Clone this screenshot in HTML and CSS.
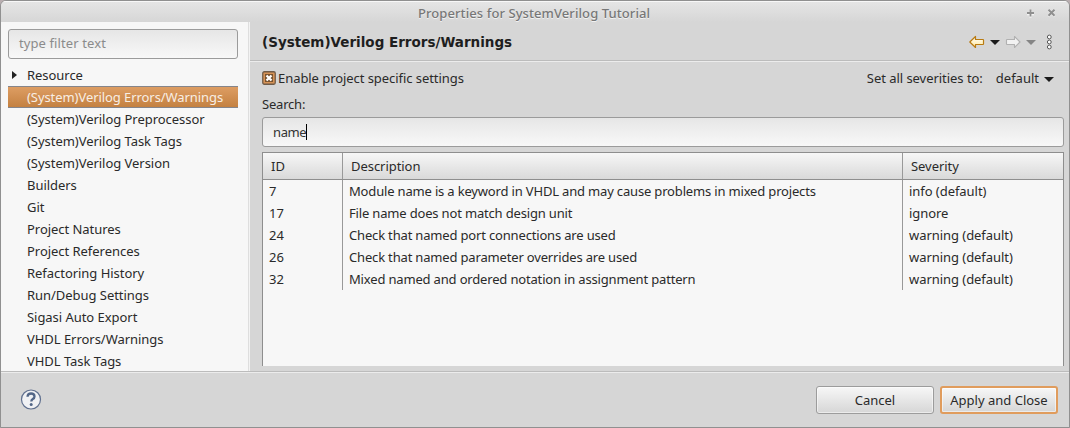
FILE: index.html
```html
<!DOCTYPE html>
<html lang="en">
<head>
<meta charset="utf-8">
<title>Properties for SystemVerilog Tutorial</title>
<link rel="stylesheet" href="styles.css">
</head>
<body>
<div class="window">
  <header class="titlebar">
    <span class="title">Properties for SystemVerilog Tutorial</span>
    <svg class="controls" width="30" height="10" viewBox="0 0 30 10"><path d="M0 5.500h7M3.500 2v7" stroke="#f4f4f4" stroke-width="2" transform="translate(0 .8)"/><path d="M0 5h7M3.500 1.500v7" stroke="#8f8f8f" stroke-width="1.800"/><path d="M21.500 2.500l6 6M27.500 2.500l-6 6" stroke="#f4f4f4" stroke-width="2"/><path d="M21.500 1.700l6 6M27.500 1.700l-6 6" stroke="#8f8f8f" stroke-width="2"/></svg>
  </header>
  <div class="body">
    <nav class="sidebar">
      <div class="field filter">type filter text</div>
      <ul class="tree">
        <li class="t-res"><svg class="expander" width="5" height="8"><path d="M0 0l5 4-5 4z" fill="#222"/></svg>Resource</li>
        <li class="selected">(System)Verilog Errors/Warnings</li>
        <li>(System)Verilog Preprocessor</li>
        <li>(System)Verilog Task Tags</li>
        <li>(System)Verilog Version</li>
        <li>Builders</li>
        <li>Git</li>
        <li>Project Natures</li>
        <li>Project References</li>
        <li>Refactoring History</li>
        <li>Run/Debug Settings</li>
        <li>Sigasi Auto Export</li>
        <li>VHDL Errors/Warnings</li>
        <li>VHDL Task Tags</li>
      </ul>
    </nav>
    <main class="main">
      <div class="pagehead">
        <h1>(System)Verilog Errors/Warnings</h1>
        <svg width="84" height="18" viewBox="969 33 84 18">
          <defs><linearGradient id="gold" x2="0" y2="1"><stop stop-color="#fff"/><stop offset="1" stop-color="#ffe89a"/></linearGradient></defs>
          <path d="M969.800 42l5.700-5.500v3h7.500q.5 0 .5.500v4q0 .5-.5.500h-7.500v3z" fill="url(#gold)" stroke="#b97b12" stroke-width="1.200" stroke-linejoin="round"/>
          <path d="M990 40h10l-5 5z" fill="#1b1b1b"/>
          <path d="M1020 42l-5.500-5.500v3h-7.500q-.5 0-.5.500v4q0 .5.500.5h7.500v3z" fill="#f2f2f2" stroke="#b1b1b1" stroke-width="1.100" stroke-linejoin="round"/>
          <path d="M1026 40h10l-5 5z" fill="#858585"/>
          <g fill="#fff" stroke="#555"><circle cx="1049.300" cy="37" r="1.900"/><circle cx="1049.300" cy="42" r="1.900"/><circle cx="1049.300" cy="47" r="1.900"/></g>
        </svg>
      </div>
      <div class="options">
        <svg width="14" height="14"><rect x=".75" y=".75" width="12.500" height="12.500" rx="1.500" fill="#d79356" stroke="#705c49" stroke-width="1.300"/><rect x="3" y="3" width="8" height="8" fill="#79532f"/><path d="M4.500 4.500l5 5M9.500 4.500l-5 5" stroke="#fff" stroke-width="2.300"/></svg>
        <span class="enable">Enable project specific settings</span>
        <span class="setall">Set all severities to:</span>
        <span class="default">default</span>
        <svg class="dropdown" width="10" height="5"><path d="M0 0h10l-5 5z" fill="#1b1b1b"/></svg>
      </div>
      <div class="searchlabel">Search:</div>
      <div class="field search">name<i class="caret"></i></div>
      <div class="table">
        <div class="row head"><span>ID</span><span>Description</span><span>Severity</span></div>
        <div class="row"><span>7</span><span>Module name is a keyword in VHDL and may cause problems in mixed projects</span><span>info (default)</span></div>
        <div class="row"><span>17</span><span>File name does not match design unit</span><span>ignore</span></div>
        <div class="row"><span>24</span><span>Check that named port connections are used</span><span>warning (default)</span></div>
        <div class="row"><span>26</span><span>Check that named parameter overrides are used</span><span>warning (default)</span></div>
        <div class="row"><span>32</span><span>Mixed named and ordered notation in assignment pattern</span><span>warning (default)</span></div>
      </div>
    </main>
  </div>
  <footer class="footer">
    <svg width="22" height="22" viewBox="0 0 22 22"><circle cx="11" cy="10.500" r="9.500" fill="#f0f1f4" stroke="#60708f" stroke-width="1.200"/><path d="M7.500 7.700q.2-3.200 3.600-3.200t3.400 2.900q0 1.600-1.700 2.600-1.500.9-1.500 2.500" fill="none" stroke="#536788" stroke-width="2.300"/><circle cx="11.200" cy="15.500" r="1.500" fill="#536788"/></svg>
    <span class="btn cancel">Cancel</span>
    <span class="btn apply">Apply and Close</span>
  </footer>
</div>
</body>
</html>
```
FILE: styles.css
```css
* { box-sizing: border-box; }
body { margin: 0; background: #b9aeb0; font: 13px/22px "Noto Sans", sans-serif; color: #2a2a2a; white-space: nowrap; }
svg { display: block; flex: none; }
.window { width: 1070px; height: 428px; border: 1px solid #909090; border-radius: 6px 6px 0 0; background: #d6d6d6; display: flex; flex-direction: column; overflow: hidden; }
.titlebar { flex: none; height: 21px; display: flex; align-items: center; background: linear-gradient(#e6e6e6, #d6d6d6); box-shadow: inset 0 1px #f8f8f8; padding: 3px 12px 0 417px; }
.title { color: #777; font-weight: 500; letter-spacing: 0.08px; text-shadow: 0 1px #f2f2f2; }
.controls { margin-left: auto; }
.body { flex: none; height: 349px; display: flex; }
.sidebar { width: 249px; padding: 7px 0 0 7px; background: #f7f7f7; border-right: 1px solid #f3f3f3; box-shadow: inset -1px 0 #dedede; overflow: hidden; }
.field { border: 1px solid #9b9b9b; border-radius: 3px; background: linear-gradient(#e6e6e6, #f8f8f8); height: 30px; line-height: 27px; padding-left: 10px; }
.filter { width: 230px; color: #8b8b8b; letter-spacing: 0.1px; }
.tree { list-style: none; margin: 5px 0 0; padding: 0; width: 230px; letter-spacing: -0.04px; }
.tree li { height: 22px; line-height: 22px; padding-left: 19px; }
.tree .t-res { display: flex; align-items: center; padding-left: 4px; }
.expander { margin-right: 10px; }
.tree .selected { color: #f8eee4; background: linear-gradient(#dd9d63, #c48141); border: solid #85858b; border-width: 1px 0; line-height: 20px; letter-spacing: -0.07px; }
.main { flex: 1; display: flex; flex-direction: column; padding: 0 5px 5px 0; }
.pagehead { height: 39px; margin-right: -5px; padding: 2px 16px 0 12px; display: flex; justify-content: space-between; align-items: center; border-bottom: 1px solid #bcbcbc; box-shadow: 0 1px #ececec; }
h1 { margin: 0; padding-top: 1px; font: bold 13.5px/21px "DejaVu Sans", sans-serif; color: #1e1e1e; }
.options { height: 33px; padding: 0 10px 0 12px; display: flex; align-items: center; }
.enable { margin-left: 2px; letter-spacing: -0.06px; }
.setall { margin-left: auto; letter-spacing: -0.04px; }
.default { margin: 0 5px 0 13px; }
.dropdown { margin-top: 3px; }
.searchlabel { padding-left: 12px; height: 23px; line-height: 20px; letter-spacing: -0.2px; }
.search { margin-left: 12px; color: #333; display: flex; flex: none; align-items: center; letter-spacing: -0.4px; }
.caret { width: 1px; height: 16px; background: #000; }
.table { margin: 5px 0 0 12px; flex: 1; border: 1px solid #8e8e8e; border-bottom: 0; background: #f7f7f7; }
.row { display: grid; grid-template-columns: 80px 560px 1fr; height: 22px; }
.row span { padding-left: 6px; border-right: 1px solid #999; }
.row span:nth-child(2) { letter-spacing: -0.17px; }
.row span:last-child { border-right: 0; letter-spacing: -0.05px; }
.head { height: 27px; line-height: 26px; background: linear-gradient(#f7f7f7, #d9d9d9); border-bottom: 1px solid #8e8e8e; }
.head span { padding-left: 8px; }
.head span:nth-child(2) { letter-spacing: -0.05px; }
.footer { flex: 1; display: flex; align-items: center; padding: 0 11px 0 19px; border-top: 1px solid #bcbcbc; box-shadow: inset 0 1px #ececec; }
.btn { height: 28px; width: 118px; text-align: center; line-height: 26px; border: 1px solid #9c9c9c; border-radius: 3px; background: linear-gradient(#f7f7f7, #d6d6d6); box-shadow: inset 0 0 0 1px #ffffff80; }
.cancel { margin-left: auto; margin-right: 6px; }
.apply { border: 2px solid #e09c5d; line-height: 24px; }
```
